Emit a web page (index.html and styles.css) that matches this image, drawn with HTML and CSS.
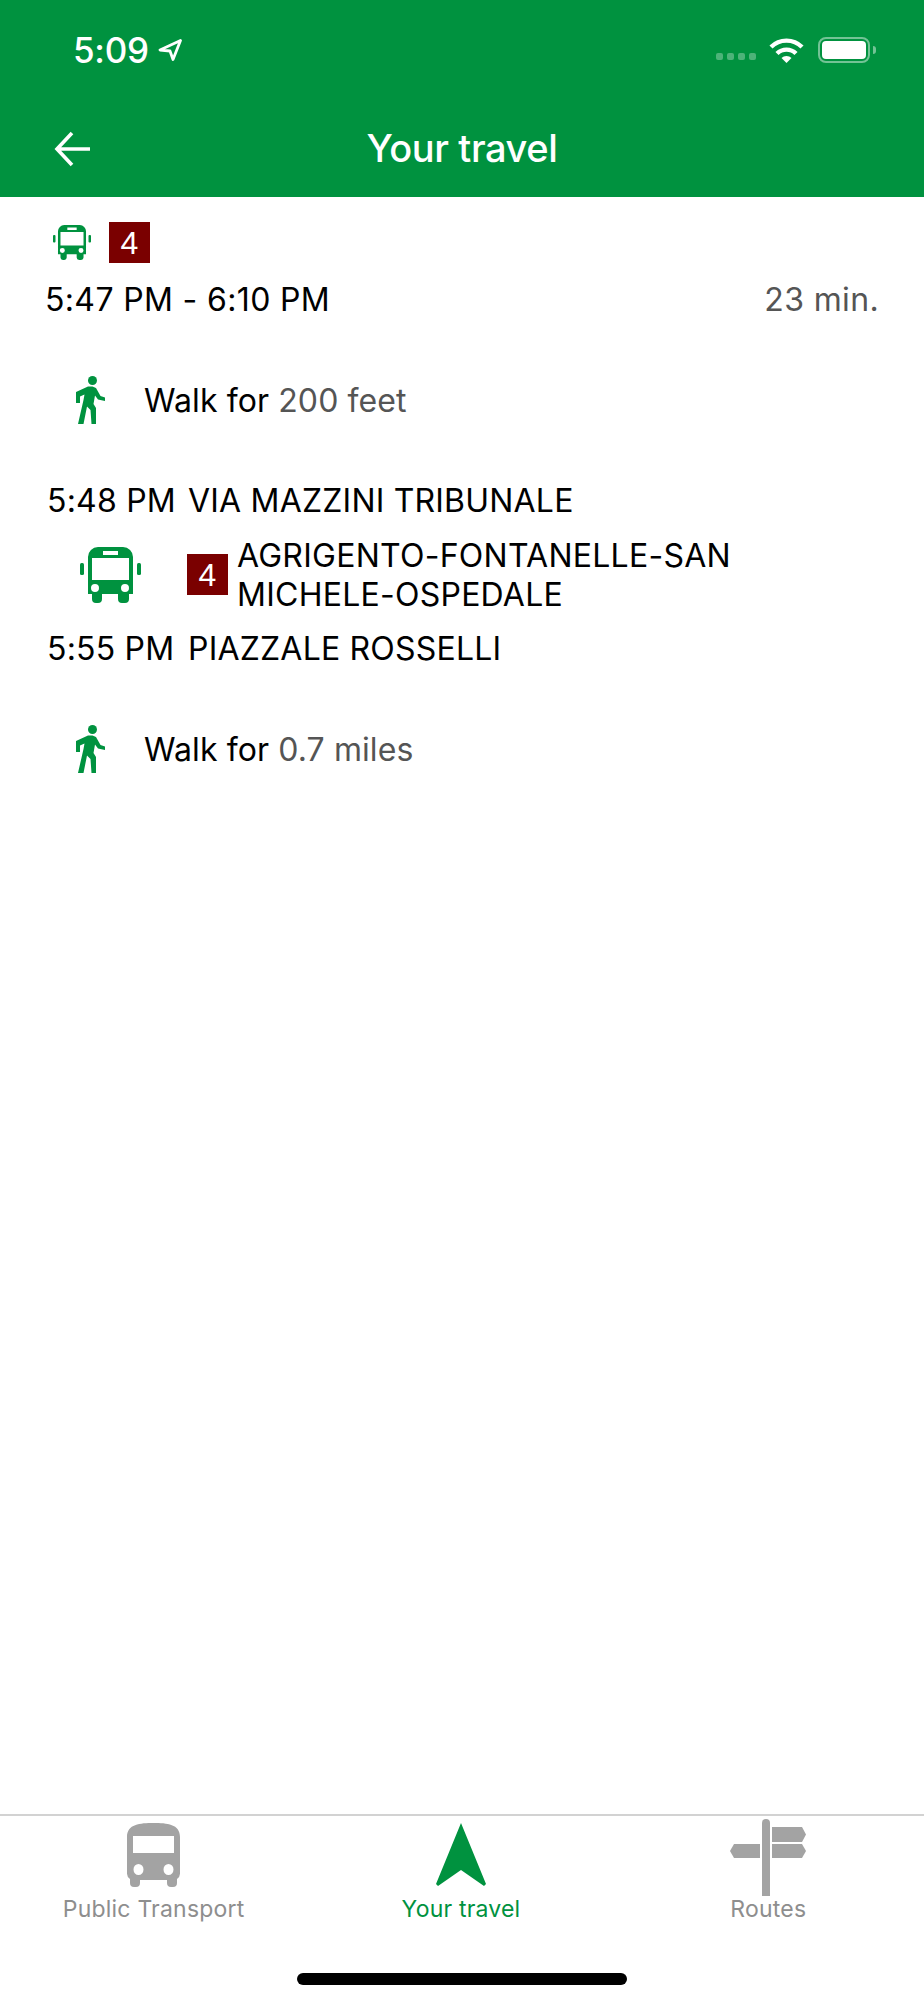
FILE: index.html
```html
<!DOCTYPE html>
<html lang="en">

<head>
    <meta charset="UTF-8">
    <meta name="viewport" content="width=device-width, initial-scale=1.0">
    <title>Your travel</title>
    <link rel="stylesheet" href="styles.css">
</head>

<body>
    <svg class="sprites" width="0" height="0" aria-hidden="true">
        <symbol id="bus" viewBox="0 0 61 56">
            <path fill-rule="evenodd" d="M18 0H43A10 10 0 0 1 53 10V47H49V52A4 4 0 0 1 45 56H42A4 4 0 0 1 38 52V47H22V52A4 4 0 0 1 18 56H16A4 4 0 0 1 12 52V47H8V10A10 10 0 0 1 18 0ZM23 4V8H38V4ZM12 11V33H49V11ZM15 37A4 4 0 1 0 15 45A4 4 0 1 0 15 37ZM45 37A4 4 0 1 0 45 45A4 4 0 1 0 45 37Z" />
            <rect x="0" y="16" width="4" height="12" rx="1.5" />
            <rect x="57" y="16" width="4" height="12" rx="1.5" />
        </symbol>
        <symbol id="walk" viewBox="0 0 29 48">
            <circle cx="16.5" cy="4.5" r="4.5" />
            <path d="M0 16L12 10.5H16.500L20 12L24.500 20L29 21.500V25L22 23.500L19 19.500L17.500 28L20 32V48H15.500L14.500 34L11 30.500L7.500 48H2L7.500 24L8.500 18.500L4 20.500V27H0Z" />
        </symbol>
    </svg>

    <header class="top">
        <div class="status">
            <div class="status-left">
                <span class="clock">5:09</span>
                <svg class="loc" viewBox="0 0 24 22">
                    <path d="M22.5 1.5L2 11L12 12L15 20.5Z" fill="none" stroke="#fff" stroke-width="2.8" stroke-linejoin="round" />
                </svg>
            </div>
            <div class="status-right">
                <div class="dots"><i></i><i></i><i></i><i></i></div>
                <svg class="wifi" viewBox="0 0 35 26">
                    <path d="M2 10A22 22 0 0 1 33 10M8 16.5A13.500 13.500 0 0 1 27 16.500" fill="none" stroke="#fff" stroke-width="4.400" />
                    <path d="M12.500 21A7 7 0 0 1 22.500 21L17.500 26Z" fill="#fff" />
                </svg>
                <div class="battery"><div class="battery-fill"></div></div>
                <div class="battery-nub"></div>
            </div>
        </div>
        <div class="navbar">
            <svg class="back" viewBox="0 0 36 36">
                <path d="M18 2L3 18L18 34M3 18H36" fill="none" stroke="#fff" stroke-width="3.600" />
            </svg>
            <h1>Your travel</h1>
        </div>
    </header>

    <main class="travel">
        <div class="route-head">
            <svg class="bus-small"><use href="#bus" /></svg>
            <span class="badge">4</span>
        </div>
        <div class="summary">
            <span>5:47 PM - 6:10 PM</span>
            <span class="muted">23 min.</span>
        </div>

        <div class="walk">
            <svg class="walk-icon"><use href="#walk" /></svg>
            <span>Walk for <span class="muted">200 feet</span></span>
        </div>

        <div class="stop">
            <span class="stop-time">5:48 PM</span>
            <span>VIA MAZZINI TRIBUNALE</span>
        </div>
        <div class="ride">
            <svg class="bus-large"><use href="#bus" /></svg>
            <span class="badge">4</span>
            <span class="ride-name">AGRIGENTO-FONTANELLE-SAN MICHELE-OSPEDALE</span>
        </div>
        <div class="stop">
            <span class="stop-time">5:55 PM</span>
            <span>PIAZZALE ROSSELLI</span>
        </div>

        <div class="walk">
            <svg class="walk-icon"><use href="#walk" /></svg>
            <span>Walk for <span class="muted">0.7 miles</span></span>
        </div>
    </main>

    <nav class="tabs">
        <div class="tab">
            <div class="tab-icon">
                <svg class="tab-bus" viewBox="0 0 53 64">
                    <path fill-rule="evenodd" d="M26.500 0C40 0 53 1 53 14V50A7 7 0 0 1 50 56V60A4 4 0 0 1 46 64H44A4 4 0 0 1 40 60V57H13V60A4 4 0 0 1 9 64H7A4 4 0 0 1 3 60V56A7 7 0 0 1 0 50V14C0 1 13 0 26.500 0ZM6 13V30H47V13ZM11.500 41A5 5.500 0 1 0 11.500 52A5 5.500 0 1 0 11.500 41ZM41.500 41A5 5.500 0 1 0 41.500 52A5 5.500 0 1 0 41.500 41Z" />
                </svg>
            </div>
            <span class="tab-label">Public Transport</span>
        </div>
        <div class="tab tab-active">
            <div class="tab-icon">
                <svg class="tab-arrow" viewBox="0 0 50 64">
                    <path d="M25 0L50 61L48 63L25 47L2 63L0 61Z" />
                </svg>
            </div>
            <span class="tab-label">Your travel</span>
        </div>
        <div class="tab">
            <div class="tab-icon">
                <svg class="tab-sign" viewBox="0 0 77 77">
                    <path d="M32 4A4 4 0 0 1 40 4V77H32Z" />
                    <path d="M42 8H72L76 15.500L72 23H42Z" />
                    <path d="M42 25H72L76 32L72 39H42Z" />
                    <path d="M30 25H4L0 32L4 39H30Z" />
                </svg>
            </div>
            <span class="tab-label">Routes</span>
        </div>
    </nav>
    <div class="home-bar"></div>
</body>

</html>
```
FILE: styles.css
```css
* {
    box-sizing: border-box;
}

body {
    font-family: Inter, "Liberation Sans", sans-serif;
    background-color: #ffffff;
    color: #000000;
    margin: 0;
    height: 2000px;
    display: flex;
    flex-direction: column;
}

.sprites {
    position: absolute;
}

/* Header */
.top {
    background-color: #00923f;
    color: #ffffff;
    height: 197px;
    flex: none;
}

.status {
    height: 98px;
    display: flex;
    justify-content: space-between;
    align-items: center;
    padding: 2px 48px 0 73px;
}

.status-left,
.status-right {
    display: flex;
    align-items: center;
}

.clock {
    font-size: 35px;
    font-weight: 500;
    letter-spacing: -0.3px;
}

.loc {
    width: 24px;
    height: 22px;
    margin-left: 9px;
}

.dots {
    display: flex;
    gap: 4px;
    margin: 12px 13px 0 0;
}

.dots i {
    width: 7px;
    height: 7px;
    border-radius: 2px;
    background-color: rgba(255, 255, 255, 0.3);
}

.wifi {
    width: 35px;
    height: 26px;
    margin-right: 14px;
}

.battery {
    width: 52px;
    height: 26px;
    padding: 2px;
    border: 2px solid rgba(255, 255, 255, 0.45);
    border-radius: 8px;
}

.battery-fill {
    height: 100%;
    background-color: #ffffff;
    border-radius: 4px;
}

.battery-nub {
    width: 3px;
    height: 8px;
    margin-left: 3px;
    border-radius: 0 3px 3px 0;
    background-color: rgba(255, 255, 255, 0.45);
}

.navbar {
    height: 99px;
    display: flex;
    align-items: center;
    justify-content: center;
    position: relative;
}

.navbar h1 {
    margin: 0;
    font-size: 38px;
    font-weight: 500;
    letter-spacing: -0.4px;
}

.back {
    position: absolute;
    left: 54px;
    top: 33px;
    width: 36px;
    height: 36px;
}

/* Travel details */
.travel {
    flex: 1;
    padding: 25px 45px 0 45px;
    font-size: 32px;
    line-height: 40px;
}

.muted {
    color: #555555;
}

.badge {
    width: 41px;
    height: 41px;
    flex: none;
    display: flex;
    align-items: center;
    justify-content: center;
    background-color: #7a0000;
    color: #ffffff;
    font-family: "Liberation Sans", sans-serif;
    font-size: 32px;
}

.route-head {
    display: flex;
    align-items: center;
}

.bus-small {
    width: 38px;
    height: 35px;
    flex: none;
    margin: 0 18px 0 8px;
    fill: #00923f;
}

.summary {
    display: flex;
    justify-content: space-between;
    margin-top: 17px;
    letter-spacing: 0.35px;
}

.walk {
    display: flex;
    align-items: center;
    height: 48px;
    margin-top: 56px;
    padding-left: 31px;
    letter-spacing: 0.1px;
}

.walk span {
    padding-top: 1px;
}

.walk-icon {
    width: 29px;
    height: 48px;
    flex: none;
    margin-right: 39px;
    fill: #00923f;
}

.stop {
    display: flex;
    margin-top: 57px;
    padding-left: 2px;
    letter-spacing: 0.2px;
}

.stop-time {
    width: 141px;
}

.ride {
    display: flex;
    align-items: center;
    margin-top: 14px;
    margin-bottom: 15px;
    padding-left: 35px;
}

.ride + .stop {
    margin-top: 0;
}

.bus-large {
    width: 61px;
    height: 56px;
    flex: none;
    margin-right: 46px;
    fill: #00923f;
}

.ride-name {
    width: 530px;
    margin-left: 9px;
    padding-top: 1px;
    line-height: 39px;
    letter-spacing: 0.25px;
}

/* Bottom tabs */
.tabs {
    flex: none;
    display: flex;
    border-top: 2px solid #d2d2d2;
    padding-right: 2px;
}

.tab {
    flex: 1;
    display: flex;
    flex-direction: column;
    align-items: center;
    color: #8e8e8e;
}

.tab-active {
    color: #00923f;
}

.tab-icon {
    height: 78px;
    display: flex;
    align-items: center;
    justify-content: center;
    fill: #a3a3a3;
}

.tab-active .tab-icon {
    fill: #00923f;
}

.tab-bus {
    width: 53px;
    height: 64px;
}

.tab-arrow {
    width: 50px;
    height: 64px;
}

.tab-sign {
    width: 77px;
    height: 77px;
    margin-top: 4px;
}

.tab-label {
    margin-top: 2px;
    font-size: 23px;
    line-height: 26px;
    font-weight: 400;
    letter-spacing: 0.2px;
}

.home-bar {
    flex: none;
    width: 330px;
    height: 12px;
    margin: 51px auto 15px;
    border-radius: 6px;
    background-color: #000000;
}
```
